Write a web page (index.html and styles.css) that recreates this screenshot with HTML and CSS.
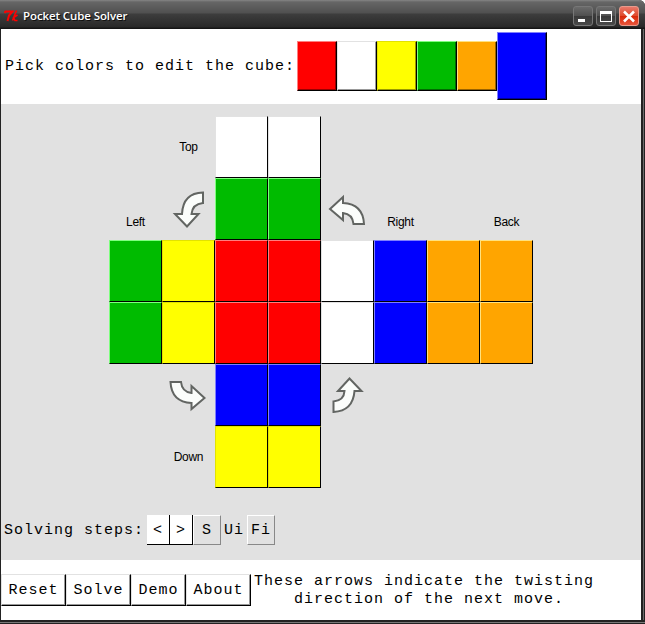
FILE: index.html
```
<!DOCTYPE html>
<html lang="en">
<head>
<meta charset="utf-8">
<title>Pocket Cube Solver</title>
<link rel="stylesheet" href="styles.css">
</head>
<body>
<div class="window">
  <header class="titlebar">
    <svg class="logo" width="15" height="12" viewBox="0 0 15 12" fill="none" stroke="#f00"><path d="M0.500 3L1.500 1.500H8.500L5 5.500L3.500 11" stroke-width="2"/><path d="M12.500 0.500L8.500 10.500M13.500 5L9.500 7.500L11 10.500H13.500" stroke-width="1.600"/></svg>
    <h1 class="title">Pocket Cube Solver</h1>
    <div class="controls">
      <button class="control" aria-label="Minimize"><svg width="18" height="18" viewBox="0 0 18 18"><path d="M4 12h7v3H4z" fill="#fff"/></svg></button>
      <button class="control" aria-label="Maximize"><svg width="18" height="18" viewBox="0 0 18 18"><path fill-rule="evenodd" d="M3 4h12v11H3zM4 7v7h10V7z" fill="#fff"/></svg></button>
      <button class="control close" aria-label="Close"><svg width="18" height="18" viewBox="0 0 18 18"><path d="M4 4.500l10 10M14 4.500l-10 10" stroke="#fff" stroke-width="2.500"/></svg></button>
    </div>
  </header>
  <main class="content">
    <section class="picker">
      <span class="picker-label">Pick colors to edit the cube:</span>
      <button class="swatch red"></button><button class="swatch white"></button><button class="swatch yellow"></button><button class="swatch green"></button><button class="swatch orange"></button><button class="swatch blue selected"></button>
    </section>
    <section class="workspace">
      <div class="cube">
        <span class="face top">Top</span>
        <span class="face left">Left</span>
        <span class="face right">Right</span>
        <span class="face back">Back</span>
        <span class="face down">Down</span>

        <i class="cell white r1 c3"></i><i class="cell white r1 c4"></i>
        <i class="cell green r2 c3"></i><i class="cell green r2 c4"></i>
        <i class="cell green r3 c1"></i><i class="cell yellow r3 c2"></i><i class="cell red r3 c3"></i><i class="cell red r3 c4"></i><i class="cell white r3 c5"></i><i class="cell blue r3 c6"></i><i class="cell orange r3 c7"></i><i class="cell orange r3 c8"></i>
        <i class="cell green r4 c1"></i><i class="cell yellow r4 c2"></i><i class="cell red r4 c3"></i><i class="cell red r4 c4"></i><i class="cell white r4 c5"></i><i class="cell blue r4 c6"></i><i class="cell orange r4 c7"></i><i class="cell orange r4 c8"></i>
        <i class="cell blue r5 c3"></i><i class="cell blue r5 c4"></i>
        <i class="cell yellow r6 c3"></i><i class="cell yellow r6 c4"></i>

        <svg class="arrow r2 c2" viewBox="0 0 53 62"><path d="M41 14.500V25Q30.500 26 29.500 36H36.500L25 48.500L13 36H20Q21 15 41 14.500Z"/></svg>
        <svg class="arrow r2 c5" viewBox="0 0 53 62"><path d="M9 31L22 19V25Q42 26 43 46H32.500Q31.500 36 22 35V42Z"/></svg>
        <svg class="arrow r5 c2" viewBox="0 0 53 62"><path d="M8.500 18H19Q20 28 29.500 29V22L42.500 34L29.500 45V39Q9.500 38 8.500 18Z"/></svg>
        <svg class="arrow r5 c5" viewBox="0 0 53 62"><path d="M12.500 48V37.500Q23 36.500 23.500 27H17L28.500 14.500L40.500 27H33.500Q32 47 12.500 48Z"/></svg>
      </div>
      <div class="steps">
        <span class="steps-label">Solving steps:</span>
        <button class="nav">&lt;</button><button class="nav">&gt;</button>
        <span class="step">S</span><span class="step current">Ui</span><span class="step">Fi</span>
      </div>
    </section>
    <footer class="actions">
      <button class="action">Reset</button><button class="action">Solve</button><button class="action demo">Demo</button><button class="action">About</button>
      <p class="hint">These arrows indicate the twisting<br><span class="hint-end">direction of the next move.</span></p>
    </footer>
  </main>
</div>
</body>
</html>
```
FILE: styles.css
```
* { box-sizing: border-box; }

body {
  margin: 0;
  background: #fff;
  font: 15px/18px "Liberation Mono", monospace;
  letter-spacing: 1px;
  color: #000;
}

button {
  margin: 0;
  padding: 0;
  border: 0;
  border-radius: 0;
  font: inherit;
  letter-spacing: inherit;
  color: inherit;
}

.window {
  width: 645px;
  height: 624px;
  display: flex;
  flex-direction: column;
  background: linear-gradient(90deg, #222 643px, #6b6b6b 643px, #6b6b6b 644px, #222 644px);
  border-radius: 0 6px 0 0;
  overflow: hidden;
}

.titlebar {
  height: 29px;
  flex: none;
  display: flex;
  align-items: center;
  padding: 3px 6px 0 4px;
  background: linear-gradient(#858585 0, #666 2px, #505050 13px, #3d3d3d 14px, #292929 27px, #151515 28px);
}

.logo { margin-right: 4px; }

.title {
  margin: 0;
  flex: 1;
  color: #fff;
  font: 600 11.5px/14px "Open Sans", sans-serif;
  letter-spacing: -0.1px;
  text-shadow: 1px 1px #111;
}

.controls { display: flex; gap: 3px; }

.control {
  width: 20px;
  height: 20px;
  border: 1px solid #777;
  border-radius: 3px;
  background: linear-gradient(#6b6b6b, #505050 48%, #393939 52%, #4a4a4a);
}

.control svg { display: block; }

.close {
  border-color: #e99b8c;
  background: linear-gradient(#e8786a, #e04a2c 48%, #d8290a 52%, #e9553a);
}

.content {
  flex: none;
  width: 641px;
  height: 591px;
  border-left: 1px solid #222;
  background: #fff;
  display: flex;
  flex-direction: column;
}

.window::after {
  content: "";
  height: 4px;
  background: linear-gradient(#222 2px, #777 2px, #777 3px, #222 3px);
}

.picker {
  height: 75px;
  flex: none;
  display: flex;
  align-items: center;
  padding: 0 0 1px 4px;
}

.picker-label { width: 292px; padding-top: 1px; white-space: nowrap; }

.red { --fill: #f00; --light: #ff7f7f; --dark: #900; }
.white { --fill: #fff; --light: #e2e2e2; --dark: #999; }
.yellow { --fill: #ff0; --light: #e2e200; --dark: #990; }
.green { --fill: #00bb00; --light: #7fff7f; --dark: #006c00; }
.orange { --fill: #ffa500; --light: #ffe27f; --dark: #996300; }
.blue { --fill: #00f; --light: #7f7fff; --dark: #009; }

.swatch {
  width: 40px;
  height: 50px;
  background: var(--fill);
  border: 1px solid #000;
  border-top-color: var(--light);
  border-left-color: var(--light);
  box-shadow: inset -1px -1px var(--dark);
}

.swatch.selected { width: 50px; height: 68px; }

.workspace {
  height: 456px;
  flex: none;
  background: #e1e1e1;
  padding-top: 12px;
}

.cube {
  display: grid;
  grid-template: repeat(6, 62px) / repeat(8, 53px);
  padding-left: 108px;
}

.cell {
  background: var(--fill);
  border: 1px solid #000;
  border-top-color: var(--light);
  border-left-color: var(--light);
}

.arrow {
  width: 53px;
  height: 62px;
  fill: #fbfdfb;
  stroke: #626562;
  stroke-width: 2;
}

.r1 { grid-row: 1; }
.r2 { grid-row: 2; }
.r3 { grid-row: 3; }
.r4 { grid-row: 4; }
.r5 { grid-row: 5; }
.r6 { grid-row: 6; }
.c1 { grid-column: 1; }
.c2 { grid-column: 2; }
.c3 { grid-column: 3; }
.c4 { grid-column: 4; }
.c5 { grid-column: 5; }
.c6 { grid-column: 6; }
.c7 { grid-column: 7; }
.c8 { grid-column: 8; }

.face {
  font: 12px/14px "Liberation Sans", sans-serif;
  letter-spacing: -0.3px;
  text-align: center;
  align-self: center;
}

.top { grid-area: 1 / 2; }
.down { grid-area: 6 / 2; }
.left { grid-area: 2 / 1; }
.right { grid-area: 2 / 6; }
.back { grid-area: 2 / 8; }
.left, .right, .back { align-self: end; padding-bottom: 11px; }

.steps {
  display: flex;
  height: 30px;
  margin-top: 27px;
  padding-left: 3px;
  line-height: 32px;
}

.steps-label { width: 143px; white-space: nowrap; }

.nav {
  width: 23px;
  background: #fff;
  border-right: 1px solid #000;
  border-bottom: 1px solid #000;
  text-align: center;
}

.step {
  width: 28px;
  border: 1px solid #fff;
  border-right-color: #888;
  border-bottom-color: #888;
  line-height: 30px;
  text-align: center;
}

.step.current { width: 26px; border-color: transparent; }

.actions {
  display: flex;
  flex: 1;
  padding-top: 14px;
}

.action {
  width: 65px;
  height: 32px;
  padding-top: 2px;
  background: #fff;
  border: 1px solid #000;
  border-top-color: #e2e2e2;
  border-left-color: #e2e2e2;
  box-shadow: inset -1px -1px #999;
}

.action.demo { width: 55px; }

.hint {
  margin: -1px 0 0 3px;
  text-align: center;
  white-space: nowrap;
}

.hint-end { padding-left: 10px; }
```
